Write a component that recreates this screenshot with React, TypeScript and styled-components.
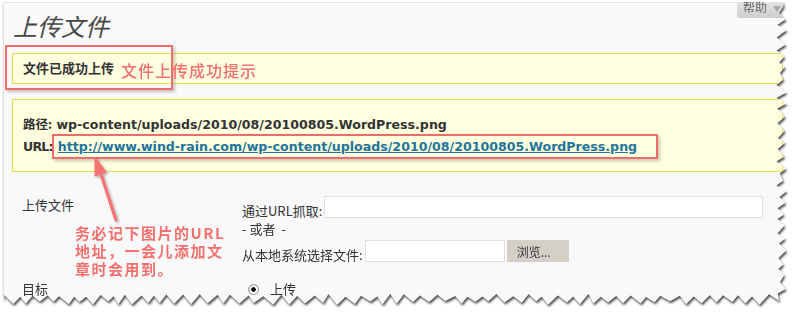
import styled, { createGlobalStyle } from "styled-components";

const GlobalStyle = createGlobalStyle`
  body {
    margin: 0;
    background: #fff;
    font-family: "Noto Sans CJK SC", "Noto Sans", sans-serif;
    color: #333;
  }
`;

const PANEL_W = 786;
const PANEL_H = 305;

// pseudo random, so the torn edge looks the same on every load
const rnd = (i: number) => {
  const x = Math.sin(i * 12.9898 + 78.233) * 43758.5453;
  return x - Math.floor(x);
};

const tornEdge = () => {
  const pts: string[] = ["0px 0px", `${PANEL_W - 6}px 0px`];
  let i = 0;
  for (let y = 4; y < PANEL_H - 10; y += 4 + rnd(i) * 4) {
    const out = i % 2 === 0;
    const x = out ? PANEL_W - 2 - rnd(i + 50) * 4 : PANEL_W - 9 - rnd(i + 90) * 4;
    pts.push(`${x.toFixed(1)}px ${y.toFixed(1)}px`);
    i++;
  }
  for (let x = PANEL_W - 10; x > 0; x -= 5 + rnd(i) * 5) {
    const out = i % 2 === 0;
    const y = out ? PANEL_H - 2 - rnd(i + 30) * 4 : PANEL_H - 10 - rnd(i + 70) * 3;
    pts.push(`${x.toFixed(1)}px ${y.toFixed(1)}px`);
    i++;
  }
  pts.push(`0px ${PANEL_H - 6}px`);
  return `polygon(${pts.join(", ")})`;
};

const TORN = tornEdge();

const Page = styled.div`
  width: 798px;
  height: 318px;
  overflow: hidden;
  padding: 2px 0 0 3px;
  box-sizing: border-box;
`;

const Torn = styled.div`
  width: ${PANEL_W}px;
  height: ${PANEL_H}px;
  filter: drop-shadow(1.5px 2px 1px rgba(0, 0, 0, 0.7));
`;

const Panel = styled.div`
  position: relative;
  width: ${PANEL_W}px;
  height: ${PANEL_H}px;
  box-sizing: border-box;
  background: #f9f9f9;
  border-top: 1px solid #e3e3e3;
  border-left: 1px solid #e3e3e3;
  padding: 8px 6px 0 8px;
  clip-path: ${TORN};
`;

const HelpTab = styled.div`
  position: absolute;
  top: -2px;
  left: 733px;
  width: 56px;
  height: 17px;
  display: flex;
  align-items: flex-start;
  gap: 6px;
  padding-left: 6px;
  box-sizing: border-box;
  background: linear-gradient(#e4e4e4, #cecece);
  border-bottom-left-radius: 3px;
  color: #666;
  font-size: 12px;
  line-height: 12px;
  overflow: hidden;
`;

const Caret = styled.span`
  margin-top: 5px;
  border-left: 4px solid transparent;
  border-right: 4px solid transparent;
  border-top: 6px solid #a9a9a9;
`;

const Title = styled.h2`
  margin: 0;
  font-size: 24px;
  line-height: 30px;
  font-weight: normal;
  font-style: italic;
  color: #464646;
  padding-left: 1px;
`;

const Notice = styled.div<{ $compact?: boolean }>`
  margin-top: ${(p) => (p.$compact ? 12 : 15)}px;
  background: #ffffe0;
  border: 1px solid #e6db55;
  padding: ${(p) => (p.$compact ? "0 10px" : "13px 10px")};
  line-height: ${(p) => (p.$compact ? 28 : 22)}px;
  font-weight: bold;
  font-size: ${(p) => (p.$compact ? 13 : 12.6)}px;
  color: #333;
  font-family: "DejaVu Sans", "Noto Sans CJK SC", sans-serif;
`;

const InfoLine = styled.div`
  white-space: nowrap;
`;

const CjkBold = styled.span<{ $size?: number }>`
  font-family: "Noto Sans CJK SC", sans-serif;
  font-size: ${(p) => p.$size ?? 12.5}px;
`;

const UrlLabel = styled.span`
  letter-spacing: -0.8px;
  margin-right: 5px;
`;

const FileLink = styled.a`
  color: #21759b;
  text-decoration: underline;
`;

const Form = styled.div`
  display: grid;
  grid-template-columns: 230px 1fr;
  row-gap: 18px;
  padding: 24px 20px 0 0;
  font-size: 13px;
  color: #333;
`;

const RowLabel = styled.div`
  padding-left: 10px;
  margin-top: -1px;
  line-height: 20px;
`;

const Fields = styled.div`
  display: flex;
  flex-direction: column;
`;

const FieldRow = styled.div`
  display: flex;
  align-items: flex-end;
`;

const FieldLabel = styled.span`
  line-height: 15px;
  white-space: nowrap;
  margin-right: 2px;
`;

const TextInput = styled.input<{ $width?: number }>`
  height: 22px;
  box-sizing: border-box;
  border: 1px solid #dfdfdf;
  background: #fff;
  padding: 0 3px;
  ${(p) => (p.$width ? `width: ${p.$width}px;` : "flex: 1; min-width: 0;")}
`;

const Or = styled.div`
  margin: 2px 0;
  line-height: 18px;
  white-space: pre;
`;

const Browse = styled.button`
  height: 22px;
  width: 62px;
  margin-left: 2px;
  border: none;
  background: #d4d0c8;
  color: #333;
  font-family: "Noto Sans CJK SC", sans-serif;
  font-size: 12px;
  text-align: left;
  padding: 0 0 0 10px;
`;

const RadioRow = styled.div`
  display: flex;
  align-items: center;
  gap: 11px;
  padding-left: 6px;
  line-height: 20px;
  margin-top: -1px;
`;

const Radio = styled.span`
  width: 11px;
  height: 11px;
  box-sizing: border-box;
  border-radius: 50%;
  border: 1px solid #8e8f8f;
  background: radial-gradient(circle, #111 0 2px, #fff 2.5px);
  box-shadow: inset 1px 1px 1px rgba(0, 0, 0, 0.15);
`;

const Callout = styled.div<{ $l: number; $t: number; $w: number; $h: number }>`
  position: absolute;
  left: ${(p) => p.$l}px;
  top: ${(p) => p.$t}px;
  width: ${(p) => p.$w}px;
  height: ${(p) => p.$h}px;
  box-sizing: border-box;
  border: 2px solid #f06c6c;
  box-shadow: 2px 2px 3px rgba(0, 0, 0, 0.22);
  pointer-events: none;
`;

const Note = styled.div<{ $l: number; $t: number; $bold?: boolean }>`
  position: absolute;
  left: ${(p) => p.$l}px;
  top: ${(p) => p.$t}px;
  color: #f56f6f;
  font-size: ${(p) => (p.$bold ? 15 : 16)}px;
  line-height: ${(p) => (p.$bold ? 18 : 20)}px;
  letter-spacing: ${(p) => (p.$bold ? 1.5 : 1)}px;
  font-weight: ${(p) => (p.$bold ? 700 : 500)};
  white-space: nowrap;
`;

const Overlay = styled.svg`
  position: absolute;
  left: 0;
  top: 0;
  pointer-events: none;
`;

export default function App() {
  return (
    <Page>
      <GlobalStyle />
      <Torn>
        <Panel>
          <HelpTab>
            帮助
            <Caret />
          </HelpTab>
          <Title>上传文件</Title>
          <Notice $compact>
            <CjkBold $size={13}>文件已成功上传</CjkBold>
          </Notice>
          <Notice>
            <InfoLine>
              <CjkBold>路径:</CjkBold> wp-content/uploads/2010/08/20100805.WordPress.png
            </InfoLine>
            <InfoLine>
              <UrlLabel>URL:</UrlLabel>
              <FileLink href="#">
                http://www.wind-rain.com/wp-content/uploads/2010/08/20100805.WordPress.png
              </FileLink>
            </InfoLine>
          </Notice>
          <Form>
            <RowLabel>上传文件</RowLabel>
            <Fields>
              <FieldRow>
                <FieldLabel>通过URL抓取:</FieldLabel>
                <TextInput />
              </FieldRow>
              <Or>{"- 或者  -"}</Or>
              <FieldRow>
                <FieldLabel>从本地系统选择文件:</FieldLabel>
                <TextInput $width={140} />
                <Browse type="button">浏览...</Browse>
              </FieldRow>
            </Fields>
            <RowLabel>目标</RowLabel>
            <RadioRow>
              <Radio />
              上传
            </RadioRow>
          </Form>

          <Callout $l={1} $t={42} $w={168} $h={45} />
          <Callout $l={48} $t={131} $w={606} $h={25} />
          <Note $l={117} $t={57}>
            文件上传成功提示
          </Note>
          <Note $l={71} $t={221} $bold>
            务必记下图片的URL
            <br />
            地址，一会儿添加文
            <br />
            章时会用到。
          </Note>
          <Overlay width={PANEL_W} height={PANEL_H}>
            <defs>
              <filter id="arrowShadow" x="-50%" y="-50%" width="200%" height="200%">
                <feDropShadow dx="1.5" dy="1.5" stdDeviation="1.2" floodOpacity="0.3" />
              </filter>
            </defs>
            <g filter="url(#arrowShadow)" fill="#f37272" stroke="#f37272">
              <line x1={112} y1={217} x2={96} y2={168} strokeWidth={3.2} strokeLinecap="round" />
              <polygon points="91,154 102.4,169.2 91,173" strokeWidth={1} strokeLinejoin="round" />
            </g>
          </Overlay>
        </Panel>
      </Torn>
    </Page>
  );
}
